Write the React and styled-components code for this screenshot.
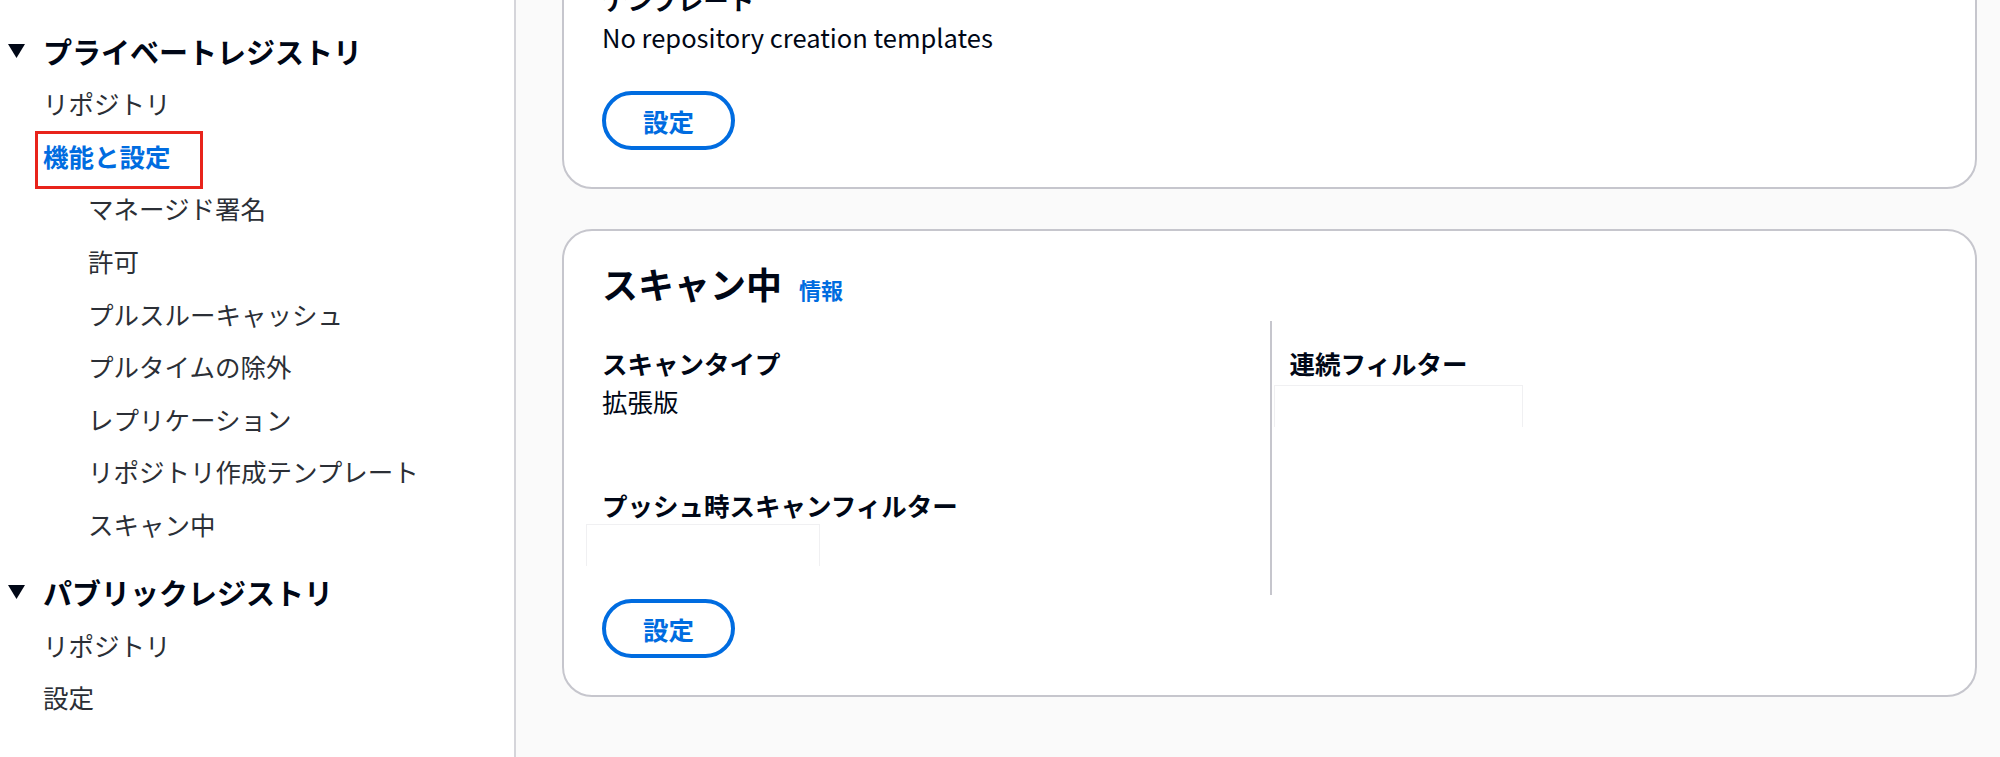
import React from "react"
import styled, { createGlobalStyle } from "styled-components"

const GlobalStyle = createGlobalStyle`
  html, body {
    margin: 0;
    padding: 0;
    background: #fafafa;
    font-family: "Noto Sans CJK JP", "Noto Sans", sans-serif;
    color: #000716;
    overflow: hidden;
  }
  * { box-sizing: border-box; }
`

const blue = "#006ce0"
const line = "#c6c6cd"

const Layout = styled.div`
  display: flex;
  height: 757px;
  overflow: hidden;
`

const Sidebar = styled.nav`
  width: 516px;
  flex-shrink: 0;
  background: #fff;
  border-right: 2px solid #d5d5da;
  padding-top: 24.7px;
`

const Section = styled.div`
  & + & {
    margin-top: 15.4px;
  }
`

const SectionHeading = styled.div`
  display: flex;
  align-items: center;
  gap: 18px;
  height: 52.6px;
  padding-left: 8px;
  font-size: 29px;
  font-weight: 700;
  color: #000716;
`

const Caret = () => (
  <svg width="17" height="14" viewBox="0 0 17 14">
    <polygon points="0,0 17,0 8.5,14" fill="#000716" />
  </svg>
)

const NavItem = styled.a`
  display: block;
  height: 52.6px;
  line-height: 52.6px;
  padding-left: ${p => (p.$sub ? 88 : 43)}px;
  font-size: 25.5px;
  color: ${p => (p.$active ? blue : "#2b2f36")};
  font-weight: ${p => (p.$active ? 700 : 400)};
  text-decoration: none;
`

const Marked = styled.span`
  position: relative;
  display: inline-block;
  line-height: 36px;

  &::after {
    content: "";
    position: absolute;
    top: -7px;
    bottom: -15px;
    left: -8px;
    right: -32px;
    border: 3px solid #e8231b;
  }
`

const Main = styled.main`
  flex: 1;
  display: flex;
  flex-direction: column;
  gap: 40px;
  padding: 0 23px 0 46px;
`

const Card = styled.section`
  background: #fff;
  border: 2px solid ${line};
  border-radius: 30px;
  padding: 29px 38px 37px;
  display: flex;
  flex-direction: column;
  margin-top: ${p => p.$offset || 0}px;
`

const Header = styled.div`
  display: flex;
  align-items: baseline;
  gap: 17px;
  margin-bottom: 15px;
`

const Title = styled.h2`
  margin: 0;
  font-size: 36px;
  line-height: 46px;
  font-weight: 700;
`

const Info = styled.a`
  font-size: 22px;
  font-weight: 700;
  color: ${blue};
  text-decoration: none;
`

const Columns = styled.div`
  display: grid;
  grid-template-columns: ${p => (p.$count === 2 ? "1fr 1fr" : "1fr")};
`

const Column = styled.div`
  display: flex;
  flex-direction: column;
  gap: 66px;
  padding: 23px 0 ${p => p.$bottom || 29}px;

  & + & {
    border-left: 2px solid ${line};
    padding-left: 18px;
  }
`

const Pair = styled.div`
  display: flex;
  flex-direction: column;
`

const Label = styled.div`
  font-size: 25.5px;
  line-height: 38px;
  font-weight: 700;
`

const Value = styled.div`
  font-size: 25.5px;
  line-height: 38px;
`

const Blank = styled.div`
  width: ${p => p.$w}px;
  height: 42px;
  margin: ${p => p.$top || 0}px 0 0 -16px;
  background: #fff;
  border: 1px solid #f0f0f2;
  border-bottom: none;
`

const Button = styled.button`
  align-self: flex-start;
  margin-top: 4px;
  width: 133px;
  height: 59px;
  border: 4px solid ${blue};
  border-radius: 30px;
  background: #fff;
  color: ${blue};
  font-family: inherit;
  font-size: 25.5px;
  font-weight: 700;
  cursor: pointer;
`

const privateItems = [
  { label: "リポジトリ" },
  { label: "機能と設定", active: true },
  { label: "マネージド署名", sub: true },
  { label: "許可", sub: true },
  { label: "プルスルーキャッシュ", sub: true },
  { label: "プルタイムの除外", sub: true },
  { label: "レプリケーション", sub: true },
  { label: "リポジトリ作成テンプレート", sub: true },
  { label: "スキャン中", sub: true },
]

const publicItems = [{ label: "リポジトリ" }, { label: "設定" }]

const NavSection = ({ title, items }) => (
  <Section>
    <SectionHeading>
      <Caret />
      {title}
    </SectionHeading>
    {items.map(item => (
      <NavItem key={item.label} $sub={item.sub} $active={item.active}>
        {item.active ? <Marked>{item.label}</Marked> : item.label}
      </NavItem>
    ))}
  </Section>
)

export default function App() {
  return (
    <>
      <GlobalStyle />
      <Layout>
        <Sidebar>
          <NavSection title="プライベートレジストリ" items={privateItems} />
          <NavSection title="パブリックレジストリ" items={publicItems} />
        </Sidebar>
        <Main>
          {/* scrolled: only the end of this card is in view */}
          <Card $offset={-74}>
            <Columns $count={1}>
              <Column $bottom={31}>
                <Pair>
                  <Label>テンプレート</Label>
                  <Value>No repository creation templates</Value>
                </Pair>
              </Column>
            </Columns>
            <Button>設定</Button>
          </Card>
          <Card>
            <Header>
              <Title>スキャン中</Title>
              <Info>情報</Info>
            </Header>
            <Columns $count={2}>
              <Column>
                <Pair>
                  <Label>スキャンタイプ</Label>
                  <Value>拡張版</Value>
                </Pair>
                <Pair>
                  <Label>プッシュ時スキャンフィルター</Label>
                  <Blank $w={234} />
                </Pair>
              </Column>
              <Column>
                <Pair>
                  <Label>連続フィルター</Label>
                  <Blank $w={249} $top={3} />
                </Pair>
              </Column>
            </Columns>
            <Button>設定</Button>
          </Card>
        </Main>
      </Layout>
    </>
  )
}
